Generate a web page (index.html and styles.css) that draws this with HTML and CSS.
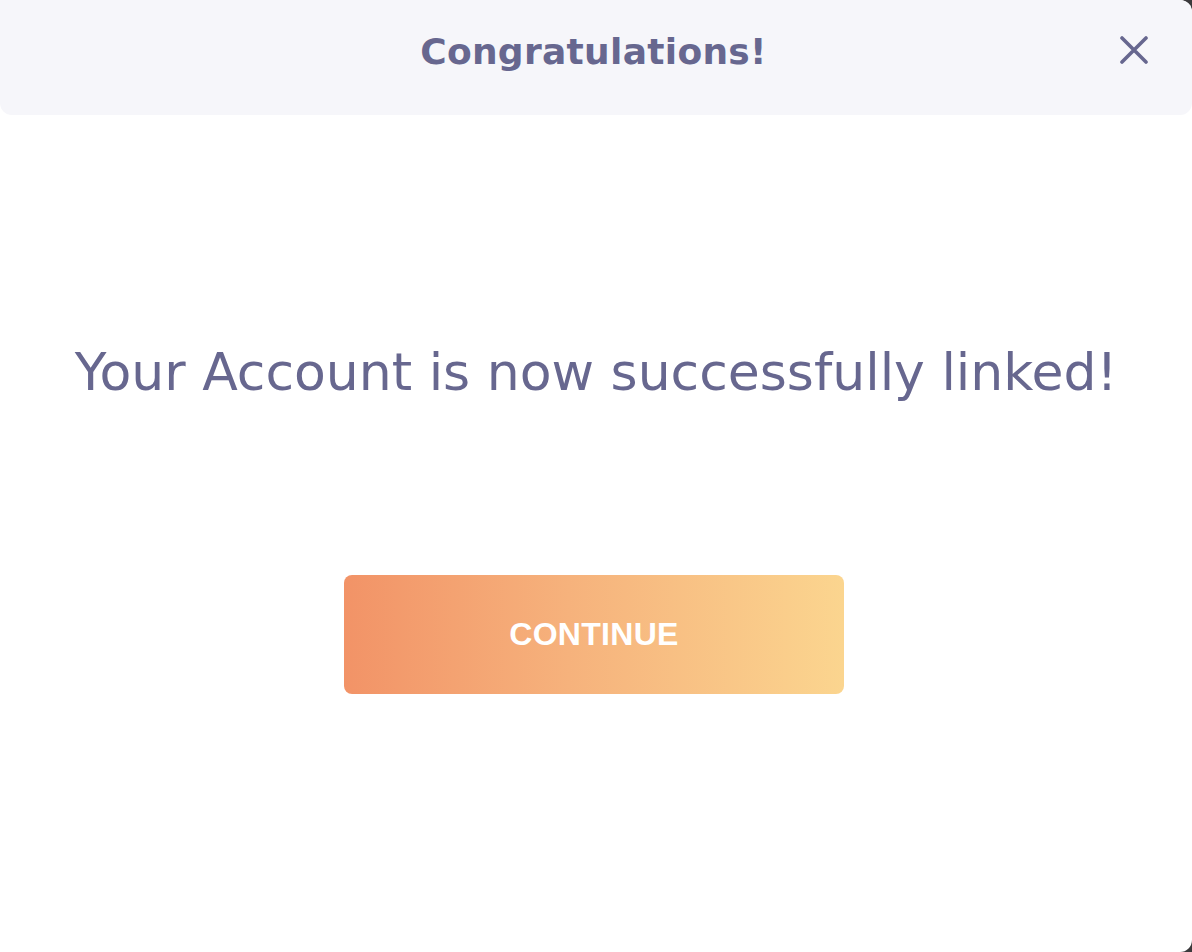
FILE: index.html
```html
<!DOCTYPE html>
<html lang="en">
<head>
<meta charset="utf-8">
<title>Congratulations</title>
<link rel="stylesheet" href="styles.css">
</head>
<body>
<div class="modal">
  <header class="modal-header">
    <h1 class="modal-title">Congratulations!</h1>
    <button class="close-btn" aria-label="Close">
      <svg width="28" height="28" viewBox="0 0 28 28" fill="none">
        <path d="M2 2 L26 26 M26 2 L2 26" stroke="#67678f" stroke-width="3.6" stroke-linecap="round"/>
      </svg>
    </button>
  </header>
  <main class="modal-body">
    <p class="message">Your Account is now successfully linked!</p>
    <button class="continue-btn">CONTINUE</button>
  </main>
</div>
</body>
</html>
```
FILE: styles.css
```css
html, body {
  margin: 0;
  padding: 0;
}
body {
  background: #3b3a3c;
  width: 1192px;
  height: 952px;
  overflow: hidden;
}
.modal {
  width: 1192px;
  height: 952px;
  background: #ffffff;
  border-radius: 0 12px 12px 0;
  display: flex;
  flex-direction: column;
}
.modal-header {
  position: relative;
  height: 115px;
  box-sizing: border-box;
  padding-top: 31px;
  background: #f6f6fa;
  border-radius: 0 12px 12px 12px;
  display: flex;
  justify-content: center;
  align-items: flex-start;
}
.modal-title {
  margin: 0 5px 0 0;
  font-family: "DejaVu Sans", sans-serif;
  font-weight: 700;
  font-size: 36px;
  line-height: normal;
  color: #67678f;
  letter-spacing: 0.3px;
}
.close-btn {
  position: absolute;
  top: 36px;
  right: 44px;
  width: 28px;
  height: 28px;
  padding: 0;
  border: 0;
  background: transparent;
  display: flex;
}
.modal-body {
  display: flex;
  flex-direction: column;
  align-items: center;
  padding-top: 227px;
}
.message {
  margin: 0;
  font-family: "DejaVu Sans", sans-serif;
  font-weight: 400;
  font-size: 52px;
  line-height: normal;
  color: #67678f;
}
.continue-btn {
  margin: 173px 4px 0 0;
  width: 500px;
  height: 119px;
  border: 0;
  border-radius: 8px;
  background: linear-gradient(90deg, #f29367 0%, #f6b27c 45%, #fbd58f 100%);
  color: #ffffff;
  font-family: "Liberation Sans", Arial, sans-serif;
  font-weight: 700;
  font-size: 32px;
  letter-spacing: 0.3px;
  display: flex;
  align-items: center;
  justify-content: center;
  padding: 0;
}
```
